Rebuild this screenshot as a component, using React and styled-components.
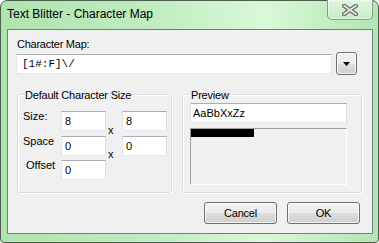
import React from "react";
import styled, { createGlobalStyle } from "styled-components";

const GlobalStyle = createGlobalStyle`
  html, body {
    margin: 0;
    padding: 0;
    background: #ffffff;
  }

  body {
    font-family: "Liberation Sans", Arial, sans-serif;
    font-size: 11px;
    color: #000;
  }

  * {
    box-sizing: border-box;
  }
`;

const Frame = styled.div`
  width: 379px;
  height: 243px;
  display: flex;
  flex-direction: column;
  padding: 0 5px 8px 6px;
  border: 1px solid #4f5f4f;
  border-radius: 7px 7px 4px 4px;
  background: linear-gradient(
    90deg,
    #afe4af 0%,
    #c0ecc0 40%,
    #d9f8d9 70%,
    #c4eec4 86%,
    #b0e5b0 100%
  );
`;

const TitleBar = styled.div`
  position: relative;
  height: 28px;
  flex: 0 0 auto;
  padding-top: 6px;
`;

const Title = styled.span`
  font-size: 12px;
  line-height: 15px;
  color: #000;
`;

const CloseButton = styled.div`
  position: absolute;
  top: -1px;
  right: 0;
  width: 46px;
  height: 20px;
  display: flex;
  align-items: center;
  justify-content: center;
  border: 1px solid rgba(50, 70, 50, 0.5);
  border-top: none;
  border-radius: 0 0 5px 5px;
  background: linear-gradient(#dff7df, #c4edc4);
  box-shadow: inset 0 0 0 1px rgba(255, 255, 255, 0.45);
`;

const Client = styled.div`
  flex: 1 1 auto;
  display: flex;
  flex-direction: column;
  padding: 8px 10px 9px 8px;
  border: 1px solid #6f7e8c;
  background: #f0f0f0;
`;

const FieldLabel = styled.div`
  height: 14px;
  line-height: 13px;
  padding-left: 1px;
  letter-spacing: -0.25px;
`;

const MapRow = styled.div`
  display: flex;
  align-items: center;
  gap: 4px;
  height: 23px;
`;

const TextBox = styled.input`
  display: block;
  width: ${(p) => p.$width}px;
  height: 20px;
  margin: 0;
  padding: 0 0 0 ${(p) => p.$pad ?? 3}px;
  border: 1px solid;
  border-color: #abadb3 #dbdfe6 #e3e9ef #e2e3ea;
  background: #fff;
  font-family: ${(p) =>
    p.$mono
      ? `"Liberation Mono", "Courier New", monospace`
      : `"Liberation Sans", Arial, sans-serif`};
  font-size: 11px;
  line-height: 13px;
  color: #000;
  outline: none;
`;

const DropButton = styled.div`
  width: 21px;
  height: 23px;
  display: flex;
  align-items: center;
  justify-content: center;
  border: 1px solid #707070;
  border-radius: 3px;
  background: linear-gradient(#f2f2f2 0%, #ebebeb 50%, #dddddd 51%, #cfcfcf 100%);
  box-shadow: inset 0 0 0 1px rgba(255, 255, 255, 0.7);
`;

const Groups = styled.div`
  display: flex;
  gap: 10px;
  margin: 19px 0 0 1px;
`;

const GroupBox = styled.div`
  position: relative;
  width: ${(p) => p.$width}px;
  height: 99px;
  padding: ${(p) => p.$pad};
  border: 1px solid #d5dfe5;
  border-radius: 3px;
  box-shadow: inset 1px 1px 0 #ffffff, 1px 1px 0 #ffffff;
`;

const GroupTitle = styled.span`
  position: absolute;
  top: -6px;
  left: ${(p) => p.$left}px;
  padding: 0 1px;
  line-height: 13px;
  background: #f0f0f0;
  letter-spacing: -0.2px;
`;

const SizeGrid = styled.div`
  display: grid;
  grid-template-columns: 38px 45px 16px 45px;
  grid-template-rows: 25px 24px 20px;
  align-items: start;
`;

const RowLabel = styled.span`
  margin-top: -1px;
  padding-left: ${(p) => p.$indent || 0}px;
  line-height: 13px;
`;

const Times = styled.span`
  align-self: end;
  margin-bottom: -1px;
  padding-left: 2px;
  line-height: 13px;
`;

const PreviewCanvas = styled.div`
  width: 157px;
  height: 57px;
  margin-top: 5px;
  border: 1px solid;
  border-color: #a0a0a0 #ffffff #ffffff #a0a0a0;
  background: #f0f0f0;
`;

const InkBar = styled.div`
  width: 63px;
  height: 8px;
  background: #000;
`;

const ButtonRow = styled.div`
  display: flex;
  justify-content: flex-end;
  gap: 10px;
  margin: 9px 2px 0 0;
`;

const PushButton = styled.div`
  width: 73px;
  height: 22px;
  display: flex;
  align-items: center;
  justify-content: center;
  border: 1px solid #707070;
  border-radius: 3px;
  background: linear-gradient(#f2f2f2 0%, #ebebeb 50%, #dddddd 51%, #cfcfcf 100%);
  box-shadow: inset 0 0 0 1px rgba(255, 255, 255, 0.7);
  line-height: 13px;
  letter-spacing: -0.2px;
`;

const CloseGlyph = () => (
  <svg width="16" height="12" viewBox="0 0 16 12">
    <path d="M2 1.8 L14 10.2 M14 1.8 L2 10.2" stroke="#6a6a6a" strokeWidth="4.2" strokeLinecap="round" />
    <path d="M2 1.8 L14 10.2 M14 1.8 L2 10.2" stroke="#e4e4e4" strokeWidth="1.8" strokeLinecap="round" />
  </svg>
);

const DownArrow = () => (
  <svg width="7" height="4" viewBox="0 0 7 4">
    <path d="M0 0 H7 L3.5 4 Z" fill="#000" />
  </svg>
);

export default function App() {
  return (
    <>
      <GlobalStyle />
      <Frame>
        <TitleBar>
          <Title>Text Blitter - Character Map</Title>
          <CloseButton>
            <CloseGlyph />
          </CloseButton>
        </TitleBar>
        <Client>
          <FieldLabel>Character Map:</FieldLabel>
          <MapRow>
            <TextBox $width={316} $pad={5} $mono readOnly value="[1#:F]\/" />
            <DropButton>
              <DownArrow />
            </DropButton>
          </MapRow>
          <Groups>
            <GroupBox $width={155} $pad="16px 0 0 5px">
              <GroupTitle $left={6}>Default Character Size</GroupTitle>
              <SizeGrid>
                <RowLabel>Size:</RowLabel>
                <TextBox $width={45} readOnly value="8" />
                <Times>x</Times>
                <TextBox $width={45} readOnly value="8" />
                <RowLabel>Space</RowLabel>
                <TextBox $width={45} readOnly value="0" />
                <Times>x</Times>
                <TextBox $width={45} readOnly value="0" />
                <RowLabel $indent={3}>Offset</RowLabel>
                <TextBox $width={45} readOnly value="0" />
              </SizeGrid>
            </GroupBox>
            <GroupBox $width={180} $pad="8px 0 0 7px">
              <GroupTitle $left={7}>Preview</GroupTitle>
              <TextBox $width={157} $pad={2} readOnly value="AaBbXxZz" />
              <PreviewCanvas>
                <InkBar />
              </PreviewCanvas>
            </GroupBox>
          </Groups>
          <ButtonRow>
            <PushButton>Cancel</PushButton>
            <PushButton>OK</PushButton>
          </ButtonRow>
        </Client>
      </Frame>
    </>
  );
}
